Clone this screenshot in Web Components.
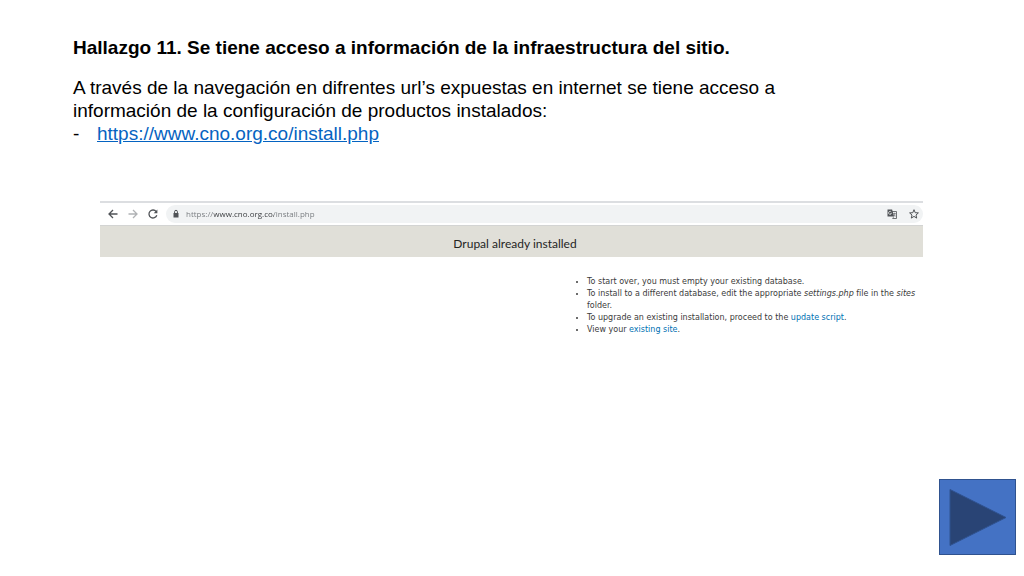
<!DOCTYPE html>
<html lang="es">
<head>
<meta charset="UTF-8">
<meta name="viewport" content="width=device-width, initial-scale=1">
<title>Hallazgo 11</title>
<style>
  body {
    margin: 0;
    background: #fff;
    color: #000;
    font-family: "Liberation Sans", Arial, sans-serif;
  }

  a {
    color: #0563c1;
  }
</style>
</head>
<body>
<finding-slide>
  <span slot="title">Hallazgo 11. Se tiene acceso a información de la infraestructura del sitio.</span>
  <span slot="text">A través de la navegación en difrentes url’s expuestas en internet se tiene acceso a información de la configuración de productos instalados:</span>
  <a slot="link" href="https://www.cno.org.co/install.php">https://www.cno.org.co/install.php</a>
  <browser-window url="https://www.cno.org.co/install.php">
    <drupal-page></drupal-page>
  </browser-window>
  <next-button slot="next"></next-button>
</finding-slide>

<script>
customElements.define(
  "finding-slide",
  class extends HTMLElement {
    constructor() {
      super();
      const shadowRoot = this.attachShadow({ mode: "open" });
      shadowRoot.innerHTML = `
      <style>
        :host {
          display: flex;
          flex-direction: column;
          box-sizing: border-box;
          min-height: 100vh;
          padding: 36px 8px 21px 73px;
        }

        header {
          max-width: 730px;
          font-size: 19px;
          line-height: 23px;
        }

        h1 {
          margin: 0 0 17px;
          font-size: 19px;
          line-height: 23px;
        }

        p {
          margin: 0;
        }

        ul {
          margin: 0;
          padding: 0 0 0 24px;
          list-style: none;
        }

        li::before {
          content: "-";
          display: inline-block;
          width: 24px;
          margin-left: -24px;
        }

        main {
          flex: 1;
          margin: 56px 93px 0 27px;
        }

        footer {
          display: flex;
          justify-content: flex-end;
        }
      </style>

      <header>
        <h1><slot name="title"></slot></h1>
        <p><slot name="text"></slot></p>
        <ul><li><slot name="link"></slot></li></ul>
      </header>
      <main><slot></slot></main>
      <footer><slot name="next"></slot></footer>
    `;
    }
  }
);

customElements.define(
  "browser-window",
  class extends HTMLElement {
    constructor() {
      super();
      const shadowRoot = this.attachShadow({ mode: "open" });
      shadowRoot.innerHTML = `
      <style>
        :host {
          display: block;
          border-top: 2px solid #dcdee1;
        }

        .toolbar {
          display: flex;
          align-items: center;
          height: 22px;
          padding-left: 6px;
          border-bottom: 1px solid #d3d4d3;
        }

        button {
          display: flex;
          align-items: center;
          justify-content: center;
          width: 14px;
          height: 14px;
          margin-right: 6px;
          padding: 0;
          border: none;
          background: none;
          color: #505357;
        }

        button:disabled {
          color: #b0b2b5;
        }

        svg {
          display: block;
          width: 12px;
          height: 12px;
          fill: none;
          stroke: currentColor;
          stroke-width: 1.3;
        }

        .address {
          flex: 1;
          display: flex;
          align-items: center;
          height: 18px;
          padding-left: 4px;
          border-radius: 9px;
          background: #f1f3f4;
          color: #505357;
        }

        /* the host name is darker than the rest of the address */
        input {
          flex: 1;
          min-width: 0;
          height: 16px;
          margin: 0 0 0 4px;
          padding: 0;
          border: none;
          outline: none;
          font: 8px/16px "Open Sans", "Noto Sans", sans-serif;
          color: transparent;
          background: linear-gradient(90deg, #74787c 28px, #34373a 28px, #34373a 88px, #74787c 88px);
          background-clip: text;
          -webkit-background-clip: text;
        }

        .address button {
          margin: 0 2px 0 6px;
        }
      </style>

      <div class="toolbar">
        <button aria-label="Atrás">
          <svg viewBox="0 0 12 12"><path d="M10.5 6H2M6 2 2 6l4 4"/></svg>
        </button>
        <button aria-label="Adelante" disabled>
          <svg viewBox="0 0 12 12"><path d="M1.500 6H10M6 2l4 4-4 4"/></svg>
        </button>
        <button aria-label="Recargar">
          <svg viewBox="0 0 12 12"><path d="M9.200 3.600A4 4 0 1 0 9.800 7.200"/><path d="M10.400 1.500v3.700H6.700z" fill="currentColor" stroke="none"/></svg>
        </button>
        <div class="address">
          <svg viewBox="0 0 12 12"><rect x="3.500" y="5" width="5" height="4.500" fill="currentColor" stroke="none"/><path d="M4.600 5V3.700a1.400 1.400 0 0 1 2.800 0V5" stroke-width="1"/></svg>
          <input type="text" aria-label="Dirección" spellcheck="false">
          <button aria-label="Traducir">
            <svg viewBox="0 0 12 12"><path d="M5.500 3.500h5v7H6.600" stroke-width=".8"/><path d="M1.500 1.500h4.600l2 7H1.500z" fill="currentColor" stroke="none"/><path d="M5.300 4.100a1.500 1.500 0 1 0 .1 1.400H4.200" stroke="#f1f3f4" stroke-width=".7"/><path d="M7.200 5.500h2.500M8.600 4.800v.7M9.200 5.700c-.3 1-.8 1.700-1.600 2.400M8 6.500l1.800 2M6.500 10.500l1.600-2" stroke-width=".6"/></svg>
          </button>
          <button aria-label="Marcar esta página">
            <svg viewBox="0 0 12 12"><path d="m6 1.700 1.200 3 3.200.2L8 7l.7 3.100L6 8.400l-2.700 1.700L4 7 1.600 4.900l3.200-.2z" stroke-width="1"/></svg>
          </button>
        </div>
      </div>
      <slot></slot>
    `;
      shadowRoot.querySelector("input").value = this.getAttribute("url");
    }
  }
);

customElements.define(
  "drupal-page",
  class extends HTMLElement {
    constructor() {
      super();
      const shadowRoot = this.attachShadow({ mode: "open" });
      shadowRoot.innerHTML = `
      <style>
        :host {
          display: block;
        }

        h2 {
          margin: 0;
          padding: 9px 0 4px 7px;
          background: #e0dfd8;
          color: #25251f;
          text-align: center;
          font-family: Lato, "Noto Sans", sans-serif;
          font-size: 12px;
          font-weight: 400;
          line-height: 18px;
        }

        ul {
          width: 334px;
          margin: 19px 2px 0 auto;
          padding: 0;
          color: #3b3b3b;
          font-family: "DejaVu Sans", sans-serif;
          font-size: 8px;
          line-height: 12px;
        }

        a {
          color: #0071b3;
          text-decoration: none;
        }
      </style>

      <h2>Drupal already installed</h2>
      <ul>
        <li>To start over, you must empty your existing database.</li>
        <li>To install to a different database, edit the appropriate <em>settings.php</em> file in the <em>sites</em> folder.</li>
        <li>To upgrade an existing installation, proceed to the <a href="#update">update script</a>.</li>
        <li>View your <a href="#site">existing site</a>.</li>
      </ul>
    `;
    }
  }
);

customElements.define(
  "next-button",
  class extends HTMLElement {
    constructor() {
      super();
      const shadowRoot = this.attachShadow({ mode: "open" });
      shadowRoot.innerHTML = `
      <style>
        :host {
          display: block;
        }

        button {
          display: block;
          padding: 0;
          border: 1px solid #2f528f;
          background: #4472c4;
          cursor: pointer;
        }

        svg {
          display: block;
          width: 75px;
          height: 74px;
        }
      </style>

      <button aria-label="Siguiente">
        <svg viewBox="0 0 75 74"><path d="M10 9.500 66 37.500 10 65.500z" fill="#294475" stroke="#2f528f"/></svg>
      </button>
    `;
    }
  }
);
</script>
</body>
</html>
